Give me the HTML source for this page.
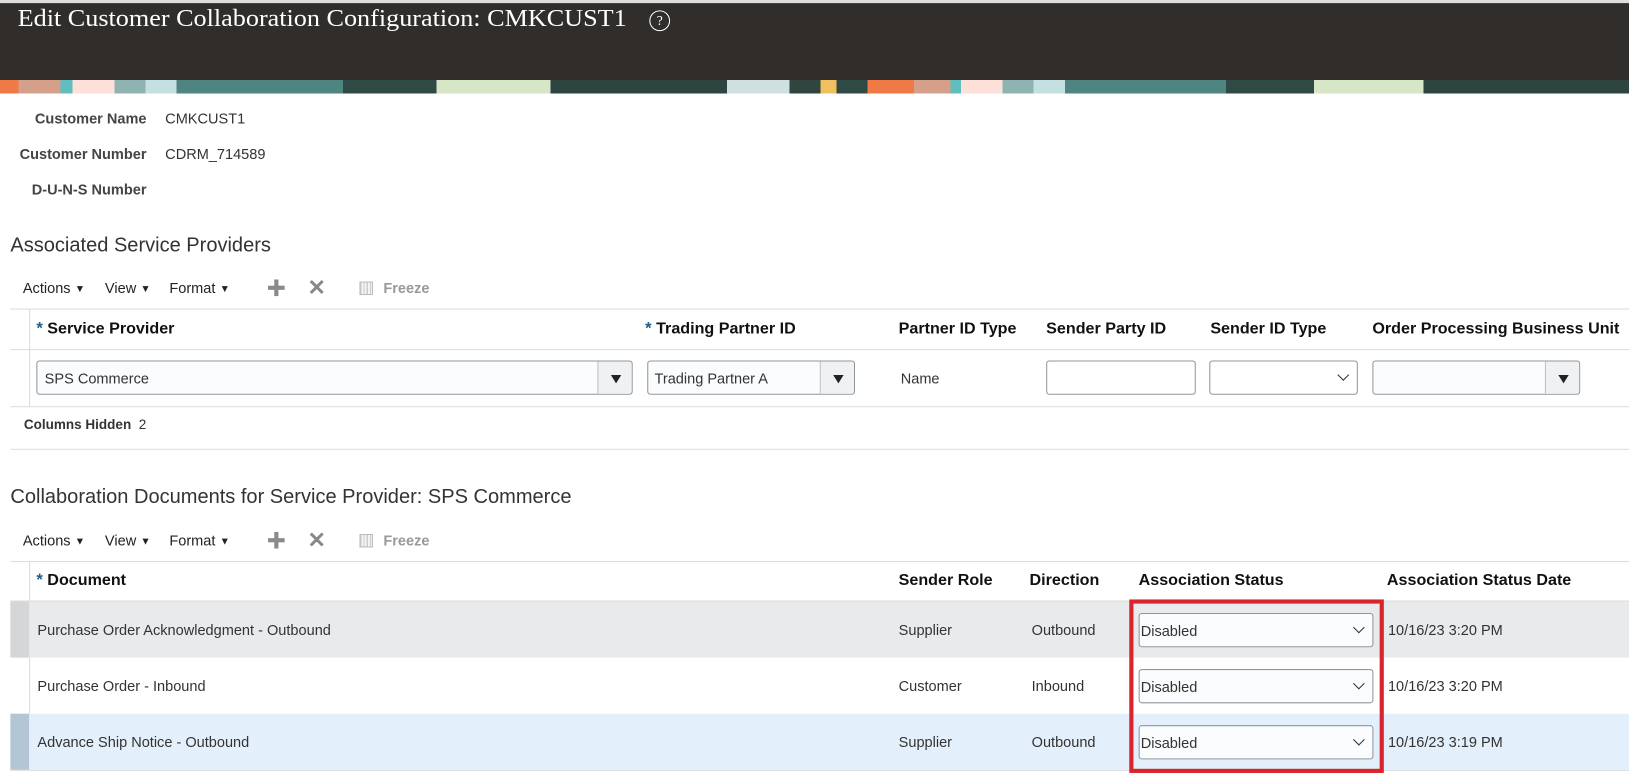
<!DOCTYPE html>
<html><head><meta charset="utf-8"><style>
*{box-sizing:border-box;margin:0;padding:0}
html,body{width:1629px;height:781px;overflow:hidden;background:#fff}
#w{position:absolute;left:0;top:0;width:1568px;height:752px;transform:scale(1.0389);transform-origin:0 0;font-family:"Liberation Sans",sans-serif;color:#333}
.a{position:absolute;white-space:nowrap}
.lbl{font-size:14px;font-weight:bold;color:#444;text-align:right;width:141px;left:0}
.h{font-size:19.3px;color:#333}
.th{font-size:15.5px;font-weight:bold;color:#111}
.st{color:#1d5d8c;font-size:16px}
.t{font-size:14px;color:#333}
.tb{font-size:14px;color:#222}
.tb i{font-style:normal;font-size:10px;margin-left:4px;position:relative;top:-1px}
.line{position:absolute;height:1px;background:#dcdcdc}
.box{position:absolute;border:1px solid #8f979e;border-radius:3px;background:#fbfcfd}
.btn{position:absolute;top:0;bottom:0;right:0;width:33px;border-left:1px solid #b0b6bb;background:#f0f1f2;border-radius:0 3px 3px 0}
.tri{position:absolute;left:12px;top:13px;width:0;height:0;border-left:5px solid transparent;border-right:5px solid transparent;border-top:8px solid #222}
.chev{position:absolute;right:9px;top:9px;width:8px;height:8px;border-right:1.5px solid #333;border-bottom:1.5px solid #333;transform:rotate(45deg)}
.plus{position:absolute;width:16px;height:16px}
.plus:before{content:"";position:absolute;left:6px;top:0;width:4px;height:16px;background:#8a8a8a}
.plus:after{content:"";position:absolute;left:0;top:6px;width:16px;height:4px;background:#8a8a8a}
</style></head><body><div id="w">
<div class="a" style="left:0;top:0;width:1568px;height:3px;background:#dedede"></div>
<div class="a" style="left:0;top:3px;width:1568px;height:74px;background:#302d2b"></div>
<div class="a" style="left:0;top:77px;width:1568px;height:13px;background:linear-gradient(90deg,#f07a45 0 18px,#d4a08a 18px 58px,#5fbfbf 58px 70px,#fde0d8 70px 110px,#8fb3b0 110px 140px,#c5e0e0 140px 170px,#4f8580 170px 330px,#2f4a45 330px 420px,#d6e6c6 420px 530px,#2e4440 530px 700px,#cfe0e0 700px 760px,#304540 760px 790px,#f0c060 790px 805px,#2f4a45 805px 835px,#f07a45 835px 880px,#d4a08a 880px 915px,#5fbfbf 915px 925px,#fde0d8 925px 965px,#8fb3b0 965px 995px,#c5e0e0 995px 1025px,#4f8580 1025px 1180px,#2f4a45 1180px 1265px,#d6e6c6 1265px 1370px,#2e4440 1370px 1568px)"></div>
<div class="a" style="left:17px;top:5px;font-family:'Liberation Serif',serif;font-size:23px;color:#fff;transform:scaleX(1.095);transform-origin:0 0">Edit Customer Collaboration Configuration: CMKCUST1</div>
<div class="a" style="left:625px;top:10px;width:20px;height:20px;border:1.5px solid #fff;border-radius:50%;color:#fff;font-size:13px;text-align:center;line-height:17px;font-family:'Liberation Serif',serif">?</div>

<div class="a lbl" style="top:106px">Customer Name</div><div class="a t" style="left:159px;top:106px">CMKCUST1</div>
<div class="a lbl" style="top:140px">Customer Number</div><div class="a t" style="left:159px;top:140px">CDRM_714589</div>
<div class="a lbl" style="top:174px">D-U-N-S Number</div>
<div class="a h" style="left:10px;top:226px">Associated Service Providers</div>

<div class="a tb" style="left:22px;top:269px">Actions<i>▼</i></div>
<div class="a tb" style="left:101px;top:269px">View<i>▼</i></div>
<div class="a tb" style="left:163px;top:269px">Format<i>▼</i></div>
<div class="plus" style="left:258px;top:269px"></div>
<div class="a" style="left:296px;top:265px;font-size:21px;font-weight:bold;color:#888">✕</div>
<div class="a" style="left:346px;top:271px;width:13px;height:13px;border:1px solid #bbb;background:repeating-linear-gradient(90deg,#ccc 0 1px,#f4f4f4 1px 3px)"></div>
<div class="a" style="left:369px;top:269px;font-size:14px;font-weight:bold;color:#999">Freeze</div>

<div class="line" style="left:10px;top:297px;width:1558px"></div>
<div class="line" style="left:10px;top:336px;width:1558px"></div>
<div class="line" style="left:10px;top:391px;width:1558px"></div>
<div class="a" style="left:28px;top:297px;width:1px;height:95px;background:#dcdcdc"></div>
<div class="a th" style="left:35px;top:308px"><span class="st">*</span> Service Provider</div>
<div class="a th" style="left:621px;top:308px"><span class="st">*</span> Trading Partner ID</div>
<div class="a th" style="left:865px;top:308px">Partner ID Type</div>
<div class="a th" style="left:1007px;top:308px">Sender Party ID</div>
<div class="a th" style="left:1165px;top:308px">Sender ID Type</div>
<div class="a th" style="left:1321px;top:308px">Order Processing Business Unit</div>
<div class="box" style="left:35px;top:347px;width:574px;height:33px"><span class="a t" style="left:7px;top:8px">SPS Commerce</span><div class="btn"><div class="tri"></div></div></div>
<div class="box" style="left:623px;top:347px;width:200px;height:33px"><span class="a t" style="left:6px;top:8px">Trading Partner A</span><div class="btn"><div class="tri"></div></div></div>
<div class="a t" style="left:867px;top:356px">Name</div>
<div class="box" style="left:1007px;top:347px;width:144px;height:33px;background:#fff"></div>
<div class="box" style="left:1164px;top:347px;width:143px;height:33px;background:#fff"><div class="chev"></div></div>
<div class="box" style="left:1321px;top:347px;width:200px;height:33px"><div class="btn"><div class="tri"></div></div></div>
<div class="a" style="left:23px;top:401px;font-size:13px;font-weight:bold;color:#333">Columns Hidden &nbsp;<span style="font-weight:normal">2</span></div>
<div class="line" style="left:10px;top:432px;width:1558px"></div>

<div class="a h" style="left:10px;top:468px">Collaboration Documents for Service Provider: SPS Commerce</div>
<div class="a tb" style="left:22px;top:512px">Actions<i>▼</i></div>
<div class="a tb" style="left:101px;top:512px">View<i>▼</i></div>
<div class="a tb" style="left:163px;top:512px">Format<i>▼</i></div>
<div class="plus" style="left:258px;top:512px"></div>
<div class="a" style="left:296px;top:508px;font-size:21px;font-weight:bold;color:#888">✕</div>
<div class="a" style="left:346px;top:514px;width:13px;height:13px;border:1px solid #bbb;background:repeating-linear-gradient(90deg,#ccc 0 1px,#f4f4f4 1px 3px)"></div>
<div class="a" style="left:369px;top:512px;font-size:14px;font-weight:bold;color:#999">Freeze</div>

<div class="line" style="left:10px;top:540px;width:1558px"></div>
<div class="a" style="left:28px;top:540px;width:1px;height:39px;background:#dcdcdc"></div>
<div class="a th" style="left:35px;top:550px"><span class="st">*</span> Document</div>
<div class="a th" style="left:865px;top:550px">Sender Role</div>
<div class="a th" style="left:991px;top:550px">Direction</div>
<div class="a th" style="left:1096px;top:550px">Association Status</div>
<div class="a th" style="left:1335px;top:550px">Association Status Date</div>
<div class="line" style="left:10px;top:578px;width:1558px"></div>
<div class="a" style="left:10px;top:579px;width:1558px;height:54px;background:#e9eaec"></div>
<div class="a" style="left:10px;top:579px;width:18px;height:54px;background:#d4d6d8"></div>
<div class="a" style="left:28px;top:633px;width:1px;height:54px;background:#dcdcdc"></div>
<div class="a" style="left:10px;top:687px;width:1558px;height:54px;background:#e3effa"></div>
<div class="a" style="left:10px;top:687px;width:18px;height:54px;background:#b3c6d6"></div>
<div class="line" style="left:10px;top:741px;width:1558px"></div>

<div class="a t" style="left:36px;top:598px">Purchase Order Acknowledgment - Outbound</div>
<div class="a t" style="left:865px;top:598px">Supplier</div>
<div class="a t" style="left:993px;top:598px">Outbound</div>
<div class="a t" style="left:1336px;top:598px">10/16/23 3:20 PM</div>
<div class="a t" style="left:36px;top:652px">Purchase Order - Inbound</div>
<div class="a t" style="left:865px;top:652px">Customer</div>
<div class="a t" style="left:993px;top:652px">Inbound</div>
<div class="a t" style="left:1336px;top:652px">10/16/23 3:20 PM</div>
<div class="a t" style="left:36px;top:706px">Advance Ship Notice - Outbound</div>
<div class="a t" style="left:865px;top:706px">Supplier</div>
<div class="a t" style="left:993px;top:706px">Outbound</div>
<div class="a t" style="left:1336px;top:706px">10/16/23 3:19 PM</div>

<div class="box" style="left:1096px;top:590px;width:226px;height:33px"><span class="a t" style="left:1px;top:8px">Disabled</span><div class="chev"></div></div>
<div class="box" style="left:1096px;top:644px;width:226px;height:33px"><span class="a t" style="left:1px;top:8px">Disabled</span><div class="chev"></div></div>
<div class="box" style="left:1096px;top:698px;width:226px;height:33px"><span class="a t" style="left:1px;top:8px">Disabled</span><div class="chev"></div></div>
<div class="a" style="left:1087px;top:577px;width:245px;height:167px;border:4px solid #d9232d"></div>
</div></body></html>
